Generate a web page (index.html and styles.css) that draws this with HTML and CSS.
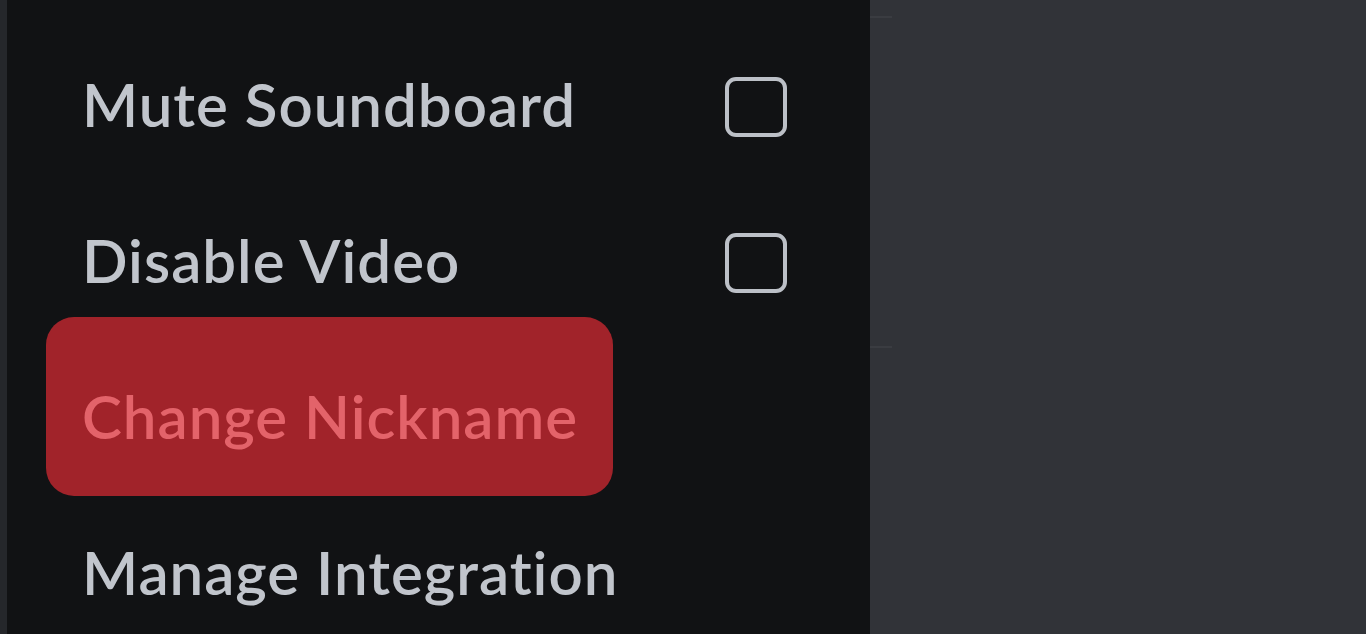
FILE: index.html
```html
<!DOCTYPE html>
<html>
<head>
<meta charset="utf-8">
<link rel="stylesheet" href="styles.css">
</head>
<body>
<div class="app">
  <div class="rail"></div>
  <div class="menu">
    <div class="item">
      <span class="label">Mute Soundboard</span>
      <span class="checkbox"></span>
    </div>
    <div class="item">
      <span class="label">Disable Video</span>
      <span class="checkbox"></span>
    </div>
    <div class="item item-danger">
      <span class="danger-box"><span class="label">Change Nickname</span></span>
    </div>
    <div class="item">
      <span class="label">Manage Integration</span>
    </div>
  </div>
  <div class="main">
    <div class="sep sep-top"></div>
    <div class="sep sep-mid"></div>
  </div>
</div>
</body>
</html>
```

FILE: styles.css
```css
html, body {
  margin: 0;
  padding: 0;
  height: 100%;
  overflow: hidden;
}
body {
  background: #313338;
  font-family: Lato, "Noto Sans", sans-serif;
}
.app {
  display: flex;
  height: 634px;
}
.rail {
  width: 7px;
  background: #25272b;
  flex-shrink: 0;
}
.menu {
  width: 863px;
  flex-shrink: 0;
  background: #111214;
  display: flex;
  flex-direction: column;
  padding-top: 29px;
  box-sizing: border-box;
}
.item {
  height: 156px;
  flex-shrink: 0;
  display: flex;
  align-items: center;
  justify-content: space-between;
  padding: 0 83px 0 75px;
  box-sizing: border-box;
}
.label {
  font-size: 60px;
  font-weight: 600;
  letter-spacing: 1px;
  font-variant-ligatures: none;
  color: #c1c5cc;
  line-height: 1;
  white-space: nowrap;
  margin-top: -6px;
}
.checkbox {
  width: 62px;
  height: 60px;
  box-sizing: border-box;
  border: 4px solid #bcc0c7;
  border-radius: 11px;
}
.item-danger {
  height: 180px;
  margin-top: -24px;
  padding: 0 0 0 39px;
  align-items: flex-start;
  justify-content: flex-start;
}
.danger-box {
  height: 179px;
  box-sizing: border-box;
  background: #a1232a;
  border-radius: 28px;
  padding: 24px 35px 0 36px;
  display: flex;
  align-items: center;
}
.danger-box .label {
  color: #e3636a;
}
.main {
  flex: 1;
  display: flex;
  flex-direction: column;
}
.sep {
  width: 22px;
  height: 2px;
  background: #3a3c41;
}
.sep-top {
  margin-top: 16px;
}
.sep-mid {
  margin-top: 328px;
}
```
